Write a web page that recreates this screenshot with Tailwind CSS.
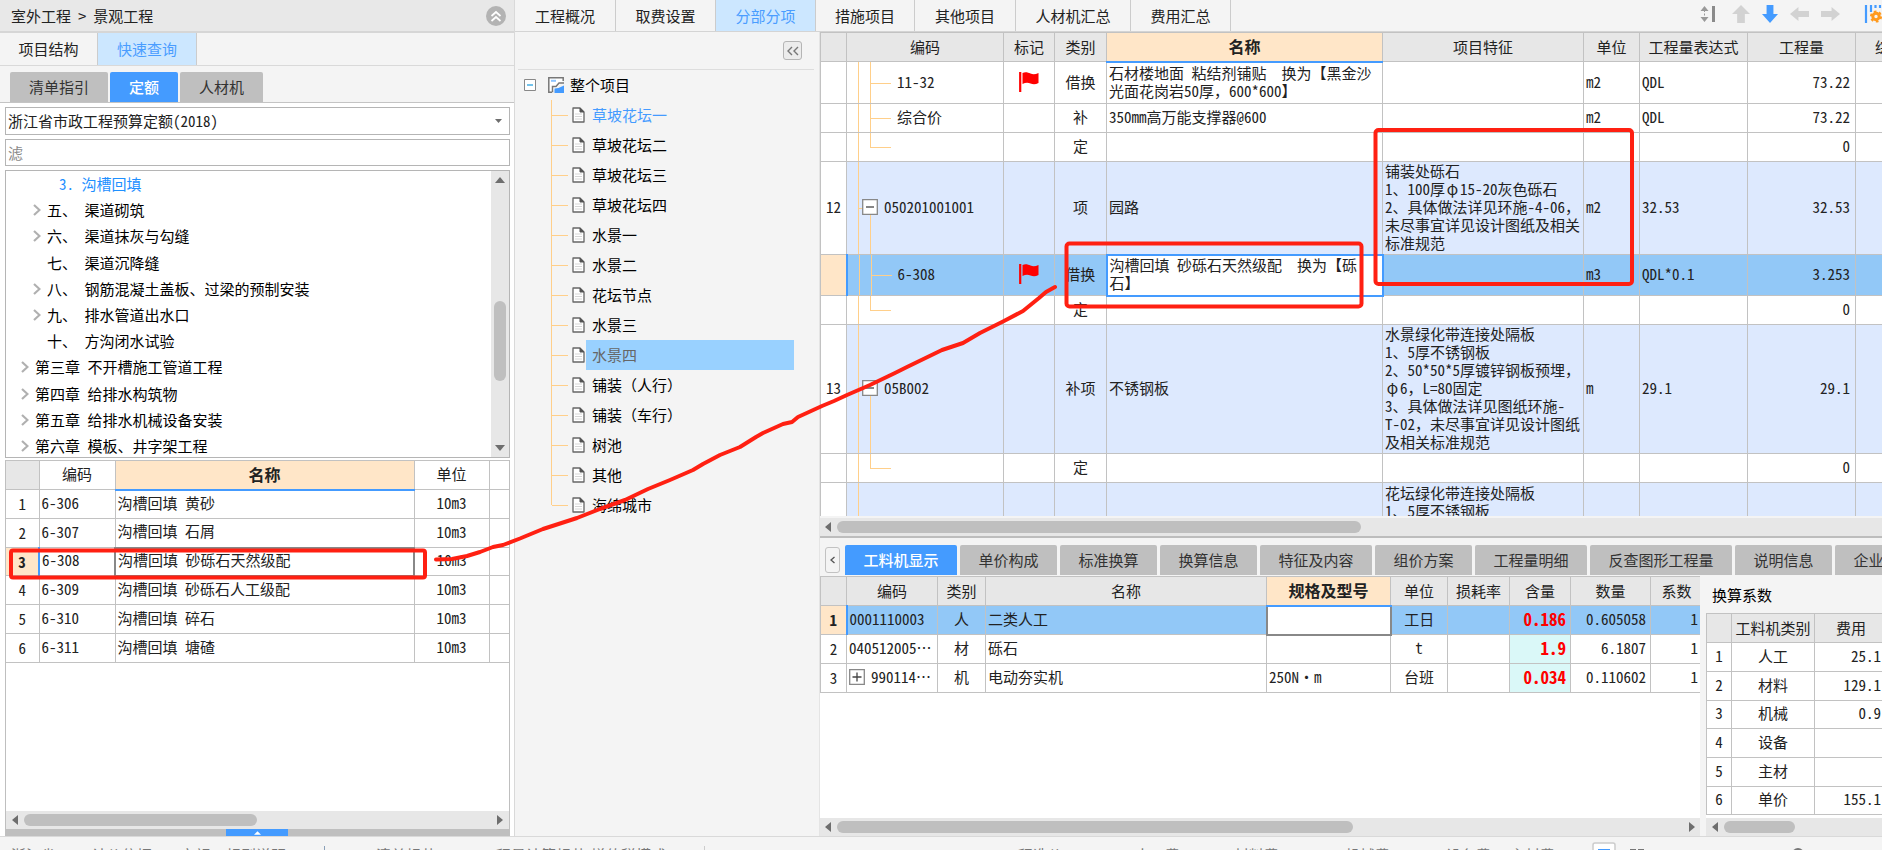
<!DOCTYPE html>
<html lang="zh-CN">
<head>
<meta charset="utf-8">
<title>室外工程 - 景观工程</title>
<script src="https://cdn.jsdelivr.net/npm/@tailwindcss/browser@4"></script>
</head>
<body class="relative h-screen overflow-hidden bg-[#f4f4f4] font-['Noto_Sans_CJK_SC',sans-serif] text-[15px] leading-[18px] text-[#222]">

<svg class="hidden">
  <symbol id="doc" viewBox="0 0 13 16"><path d="M1 1h7l4 4v10H1z" fill="#fff" stroke="#666" stroke-width="1.3" stroke-linejoin="round"/><path d="M8 1v4h4z" fill="#555" stroke="#555"/><path d="M3 7h7M3 9.5h7M3 12h7" stroke="#ccc" stroke-width=".8"/></symbol>
  <symbol id="flag" viewBox="0 0 20 20"><path d="M1.2 0v20" stroke="#f00" stroke-width="2.2"/><path d="M3.5 1c3-1.500 5.500-.5 8 .6 2.500 1 5 .8 8-.6v10c-3 1.600-5.500 1.500-8 .5s-5-1-8 .5z" fill="#f00"/></symbol>
  <symbol id="chev" viewBox="0 0 8 12"><path d="M1 1l5.500 5L1 11" fill="none" stroke="#b0b0b0" stroke-width="2.2"/></symbol>
  <symbol id="tl" viewBox="0 0 6 10"><path d="M6 0v10L0 5z" fill="#6e6e6e"/></symbol>
  <symbol id="tr" viewBox="0 0 6 10"><path d="M0 0v10l6-5z" fill="#6e6e6e"/></symbol>
  <symbol id="tu" viewBox="0 0 10 6"><path d="M0 6h10L5 0z" fill="#6e6e6e"/></symbol>
  <symbol id="td" viewBox="0 0 10 6"><path d="M0 0h10L5 6z" fill="#6e6e6e"/></symbol>
  <symbol id="minus" viewBox="0 0 16 16"><path d="M.7.700h14.600v14.600H.7z" fill="#fff" stroke="#888" stroke-width="1.300"/><path d="M4 8h8" stroke="#444" stroke-width="1.300"/></symbol>
  <symbol id="plus" viewBox="0 0 16 16"><path d="M.7.700h14.600v14.600H.7z" fill="#fff" stroke="#888" stroke-width="1.300"/><path d="M3.500 8h9M8 3.500v9" stroke="#444" stroke-width="1.300"/></symbol>
</svg>

<div class="flex h-full flex-col">
<main class="flex min-h-0 flex-1">

  <!-- Left panel: quick lookup -->
  <aside class="flex w-[515px] shrink-0 flex-col border-r border-[#d9d9d9]">
    <div class="flex h-[33px] shrink-0 items-center justify-between border-b-2 border-[#d6d6d6] bg-[#e8e8e8] pr-2 pl-[11px]">
      <span class="flex gap-[7px]"><span>室外工程</span><span>&gt;</span><span>景观工程</span></span>
      <button aria-label="收起"><svg class="block size-5" viewBox="0 0 20 20"><circle cx="10" cy="10" r="10" fill="#b3b3b3"/><path d="M5.500 10L10 6l4.500 4M5.500 15l4.500-4 4.500 4" fill="none" stroke="#fff" stroke-width="1.700"/></svg></button>
    </div>
    <div class="flex h-[33px] shrink-0 border-b border-[#d9d9d9]">
      <button class="w-[98px] border-r border-[#ccc]">项目结构</button>
      <button class="w-[99px] border-r border-[#ccc] bg-[#cce7ff] text-[#4a9dff]">快速查询</button>
    </div>
    <div class="flex h-[37px] shrink-0 items-end gap-[2px] border-b border-[#c4c4c4] pl-[10px]">
      <button class="h-[30px] w-[98px] rounded-t-[2px] bg-[#bfbfbf] text-[#333]">清单指引</button>
      <button class="h-[30px] w-[68px] rounded-t-[2px] bg-[#449bff] font-medium text-white">定额</button>
      <button class="h-[30px] w-[83px] rounded-t-[2px] bg-[#bfbfbf] text-[#333]">人材机</button>
    </div>
    <div class="flex min-h-0 flex-1 flex-col bg-white pr-1 pl-[5px] font-['Noto_Sans_Mono_CJK_SC','Noto_Sans_CJK_SC',monospace]">
      <div class="relative mt-1 h-7 shrink-0">
        <select aria-label="定额库" class="h-full w-full appearance-none border border-[#b5b5b5] bg-white pl-[2px]"><option>浙江省市政工程预算定额(2018)</option></select>
        <svg class="pointer-events-none absolute top-3 right-2 h-1 w-[7px]" viewBox="0 0 10 6" preserveAspectRatio="none"><use href="#td"/></svg>
      </div>
      <input aria-label="过滤" placeholder="滤" class="mt-1 h-[27px] shrink-0 border border-[#b5b5b5] bg-white pl-[2px] placeholder:text-[#8a8a8a]">
      <div class="mt-1 flex h-[288px] shrink-0 overflow-hidden border border-[#b5b5b5] text-black">
        <ul class="flex h-[288px] flex-1 flex-col [&_li]:flex [&_li]:flex-1 [&_li]:items-center [&_li]:whitespace-pre [&_svg]:h-3 [&_svg]:w-2">
          <li class="pl-[53px] text-[#1e90ff]">3. 沟槽回填</li>
          <li class="gap-[6px] pl-[27px]"><svg><use href="#chev"/></svg>五、 渠道砌筑</li>
          <li class="gap-[6px] pl-[27px]"><svg><use href="#chev"/></svg>六、 渠道抹灰与勾缝</li>
          <li class="pl-[41px]">七、 渠道沉降缝</li>
          <li class="gap-[6px] pl-[27px]"><svg><use href="#chev"/></svg>八、 钢筋混凝土盖板、过梁的预制安装</li>
          <li class="gap-[6px] pl-[27px]"><svg><use href="#chev"/></svg>九、 排水管道出水口</li>
          <li class="pl-[41px]">十、 方沟闭水试验</li>
          <li class="gap-[6px] pl-[15px]"><svg><use href="#chev"/></svg>第三章 不开槽施工管道工程</li>
          <li class="gap-[6px] pl-[15px]"><svg><use href="#chev"/></svg>第四章 给排水构筑物</li>
          <li class="gap-[6px] pl-[15px]"><svg><use href="#chev"/></svg>第五章 给排水机械设备安装</li>
          <li class="gap-[6px] pl-[15px]"><svg><use href="#chev"/></svg>第六章 模板、井字架工程</li>
        </ul>
        <div class="flex w-[18px] flex-col items-center bg-[#e7e7e7] py-[6px]">
          <svg class="h-[6px] w-[10px]"><use href="#tu"/></svg>
          <div class="mt-[118px] h-20 w-3 rounded-full bg-[#bfbfbf]"></div>
          <svg class="mt-auto h-[6px] w-[10px]"><use href="#td"/></svg>
        </div>
      </div>
      <div class="mt-[2px] flex min-h-0 flex-1 flex-col border-x border-[#bfbfbf]">
        <table class="w-full table-fixed border-collapse whitespace-nowrap [&_td]:border [&_td]:border-[#c2c2c2] [&_td]:p-0 [&_td]:pb-[3px] [&_td:first-child]:border-l-0 [&_td:first-child]:pb-0 [&_td:first-child]:text-center [&_td:last-child]:border-r-0 [&_td:nth-child(2)]:pl-[2px] [&_td:nth-child(3)]:pl-[2px] [&_td:nth-child(4)]:text-center [&_th]:border [&_th]:border-[#c2c2c2] [&_th]:pb-[2px] [&_th]:font-normal [&_th:first-child]:border-l-0 [&_th:last-child]:border-r-0 [&_tr]:h-[29px]">
          <colgroup><col class="w-[33px]"><col class="w-[76px]"><col class="w-[299px]"><col class="w-[75px]"><col></colgroup>
          <thead><tr><th class="bg-[#e7e7e7]"></th><th>编码</th><th class="border-b-2! border-b-[#449bff]! bg-[#ffe6c8] text-base leading-[18px] font-bold!">名称</th><th>单位</th><th></th></tr></thead>
          <tbody>
            <tr><td>1</td><td>6-306</td><td>沟槽回填 黄砂</td><td>10m3</td><td></td></tr>
            <tr><td>2</td><td>6-307</td><td>沟槽回填 石屑</td><td>10m3</td><td></td></tr>
            <tr class="h-7!"><td class="border-r-2! border-r-[#449bff]! bg-[#ffe6c8] font-bold">3</td><td>6-308</td><td class="border-2! border-[#888]!">沟槽回填 砂砾石天然级配</td><td>10m3</td><td></td></tr>
            <tr><td>4</td><td>6-309</td><td>沟槽回填 砂砾石人工级配</td><td>10m3</td><td></td></tr>
            <tr><td>5</td><td>6-310</td><td>沟槽回填 碎石</td><td>10m3</td><td></td></tr>
            <tr><td>6</td><td>6-311</td><td>沟槽回填 塘碴</td><td>10m3</td><td></td></tr>
          </tbody>
        </table>
        <div class="mt-auto flex h-[18px] items-center bg-[#e7e7e7] px-[6px]">
          <svg class="h-[10px] w-[6px]"><use href="#tl"/></svg>
          <div class="ml-[6px] h-3 w-[233px] rounded-full bg-[#bfbfbf]"></div>
          <svg class="ml-auto h-[10px] w-[6px]"><use href="#tr"/></svg>
        </div>
        <div class="flex h-[7px] bg-[#bfbfbf] pl-[220px]"><button aria-label="展开" class="flex w-[62px] items-center justify-center bg-[#449bff]"><svg class="h-1 w-[7px]" viewBox="0 0 8 4"><path d="M0 4h8L4 0z" fill="#fff"/></svg></button></div>
      </div>
    </div>
  </aside>

  <div class="flex min-w-0 flex-1 flex-col">
    <!-- Top tabs and row tools -->
    <div class="flex h-8 shrink-0 items-stretch border-b border-[#d4d4d4]">
      <nav class="flex [&_button]:border-r [&_button]:border-[#ccc]">
        <button class="w-[101px]">工程概况</button><button class="w-[100px]">取费设置</button><button class="w-[100px] bg-[#cce7ff] text-[#4a9dff]">分部分项</button><button class="w-[99px]">措施项目</button><button class="w-[101px]">其他项目</button><button class="w-[115px]">人材机汇总</button><button class="w-[100px]">费用汇总</button>
      </nav>
      <div class="ml-auto flex items-center gap-3 overflow-hidden pb-1">
        <button aria-label="行高"><svg class="h-4 w-4" viewBox="0 0 16 16"><path d="M4.500 0l4 5h-8zM4.500 16l4-5h-8z" fill="#999"/><path d="M4.500 4v8" stroke="#999" stroke-dasharray="2 1.500"/><path d="M12 0h3v16h-3z" fill="#8a8a8a"/></svg></button>
        <button aria-label="上移" class="ml-1"><svg class="h-[18px] w-[18px]" viewBox="0 0 14 18" preserveAspectRatio="none"><path d="M7 0l7 9H10v9H4V9H0z" fill="#d2d2d2"/></svg></button>
        <button aria-label="下移"><svg class="h-[18px] w-[16px]" viewBox="0 0 14 18" preserveAspectRatio="none"><path d="M7 18l7-9H10V0H4v9H0z" fill="#449bff"/></svg></button>
        <button aria-label="左移"><svg class="h-[14px] w-[19px]" viewBox="0 0 18 14" preserveAspectRatio="none"><path d="M0 7l8-7v4h10v6H8v4z" fill="#d2d2d2"/></svg></button>
        <button aria-label="右移"><svg class="h-[14px] w-[19px]" viewBox="0 0 18 14" preserveAspectRatio="none"><path d="M18 7l-8-7v4H0v6h10v4z" fill="#d2d2d2"/></svg></button>
        <button aria-label="列设置" class="ml-3 w-[18px]"><svg class="h-[20px] w-[18px]" viewBox="0 0 18 20"><path d="M2 1v18M7 1v7M11.500 1v3M16 1v3" stroke="#449bff" stroke-width="2.200"/><circle cx="12" cy="12.500" r="3.200" fill="none" stroke="#ff9a1f" stroke-width="3"/><circle cx="12" cy="12.500" r="5" fill="none" stroke="#ff9a1f" stroke-width="2.200" stroke-dasharray="2.600 2.600"/></svg></button>
      </div>
    </div>

    <div class="flex min-h-0 flex-1">
      <!-- Project tree -->
      <aside class="w-[305px] shrink-0 border-r border-[#e4e4e4] pl-[3px]">
        <div class="mr-[5px] flex h-[38px] items-center justify-end border-b border-[#ddd] pr-[12px]">
          <button aria-label="折叠" class="flex size-[19px] items-center justify-center rounded-[3px] border border-[#b5b5b5] bg-[#ececec]"><svg class="h-[10px] w-3" viewBox="0 0 12 10"><path d="M5 1L1 5l4 4M11 1L7 5l4 4" fill="none" stroke="#777" stroke-width="1.400"/></svg></button>
        </div>
        <div class="flex h-[30px] items-center pl-[6px]">
          <svg class="size-[12px]" viewBox="0 0 12 12"><path d="M.5.500h11v11H.5z" fill="#fff" stroke="#888"/><path d="M3 6h6" stroke="#29a3e0" stroke-width="1.300"/></svg>
          <svg class="ml-3 size-4" viewBox="0 0 16 16"><path d="M15.200 4V.8H.8v14.400H4" fill="#fff" stroke="#777" stroke-width="1.500"/><path d="M3 3.800h5" stroke="#8cc4ff" stroke-width="2"/><path d="M4.500 15.200V9.500h3.500l3-3.500h5" fill="none" stroke="#777" stroke-width="1.500"/><path d="M6.500 16v-4.500l4-.5 5.500-2.500V16z" fill="#449bff"/></svg>
          <span class="ml-[6px] text-black">整个项目</span>
        </div>
        <ul class="pl-[33px] text-black [&_i]:h-px [&_i]:w-4 [&_i]:bg-[#ffcf8a] [&_li]:flex [&_li]:h-[30px] [&_li]:items-center [&_li]:border-l [&_li]:border-[#ffcf8a] [&_span]:flex [&_span]:h-full [&_span]:w-[208px] [&_span]:items-center [&_span]:pl-[6px] [&_svg]:mr-px [&_svg]:ml-1 [&_svg]:h-4 [&_svg]:w-[13px]">
          <li><i></i><svg><use href="#doc"/></svg><span class="text-[#449bff]">草坡花坛一</span></li>
          <li><i></i><svg><use href="#doc"/></svg><span>草坡花坛二</span></li>
          <li><i></i><svg><use href="#doc"/></svg><span>草坡花坛三</span></li>
          <li><i></i><svg><use href="#doc"/></svg><span>草坡花坛四</span></li>
          <li><i></i><svg><use href="#doc"/></svg><span>水景一</span></li>
          <li><i></i><svg><use href="#doc"/></svg><span>水景二</span></li>
          <li><i></i><svg><use href="#doc"/></svg><span>花坛节点</span></li>
          <li><i></i><svg><use href="#doc"/></svg><span>水景三</span></li>
          <li><i></i><svg><use href="#doc"/></svg><span class="bg-[#99d1ff] text-[#666]">水景四</span></li>
          <li><i></i><svg><use href="#doc"/></svg><span>铺装（人行）</span></li>
          <li><i></i><svg><use href="#doc"/></svg><span>铺装（车行）</span></li>
          <li><i></i><svg><use href="#doc"/></svg><span>树池</span></li>
          <li><i></i><svg><use href="#doc"/></svg><span>其他</span></li>
          <li class="relative border-l-transparent!"><b class="absolute top-0 -left-px h-[15px] w-px bg-[#ffcf8a]"></b><i></i><svg><use href="#doc"/></svg><span>海绵城市</span></li>
        </ul>
      </aside>

      <section class="flex min-w-0 flex-1 flex-col font-['Noto_Sans_Mono_CJK_SC','Noto_Sans_CJK_SC',monospace]">
        <!-- Bill of quantities -->
        <div class="min-h-0 flex-1 overflow-hidden bg-white">
          <table class="w-[1135px] table-fixed border-collapse whitespace-nowrap [&_b]:absolute [&_b]:bg-[#ffcf8a] [&_td]:border [&_td]:border-[#c2c2c2] [&_td]:px-[2px] [&_td]:pt-0 [&_td]:pb-[2px] [&_td:nth-child(1)]:bg-white [&_td:nth-child(1)]:text-center [&_td:nth-child(2)]:relative [&_td:nth-child(4)]:text-center [&_td:nth-child(9)]:pr-[5px] [&_td:nth-child(9)]:text-right [&_th]:border [&_th]:border-[#c2c2c2] [&_th]:bg-[#e7e7e7] [&_th]:px-0 [&_th]:pt-0 [&_th]:pb-px [&_th]:font-normal">
            <colgroup><col class="w-[26px]"><col class="w-[157px]"><col class="w-[51px]"><col class="w-[52px]"><col class="w-[276px]"><col class="w-[201px]"><col class="w-[56px]"><col class="w-[108px]"><col class="w-[108px]"><col></colgroup>
            <thead><tr class="h-[29px]"><th></th><th>编码</th><th>标记</th><th>类别</th><th class="border-b-2! border-b-[#449bff]! bg-[#ffe6c8]! text-base leading-[18px] font-bold!">名称</th><th>项目特征</th><th>单位</th><th>工程量表达式</th><th>工程量</th><th>综合单价</th></tr></thead>
            <tbody>
              <tr class="h-[42px]"><td></td><td class="pl-[50px]!"><b class="inset-y-0 left-[11px] w-px"></b><b class="inset-y-0 left-[23px] w-px"></b><b class="top-1/2 left-[23px] h-px w-[21px]"></b>11-32</td><td><svg class="mx-auto size-5"><use href="#flag"/></svg></td><td>借换</td><td>石材楼地面 粘结剂铺贴　换为【黑金沙<br>光面花岗岩50厚，600*600】</td><td></td><td>m2</td><td>QDL</td><td>73.22</td><td></td></tr>
              <tr class="h-[29px]"><td></td><td class="pl-[50px]!"><b class="inset-y-0 left-[11px] w-px"></b><b class="inset-y-0 left-[23px] w-px"></b><b class="top-1/2 left-[23px] h-px w-[21px]"></b>综合价</td><td></td><td>补</td><td>350mm高万能支撑器@600</td><td></td><td>m2</td><td>QDL</td><td>73.22</td><td></td></tr>
              <tr class="h-[29px]"><td></td><td><b class="inset-y-0 left-[11px] w-px"></b><b class="top-0 left-[23px] h-1/2 w-px"></b><b class="top-1/2 left-[23px] h-px w-[21px]"></b></td><td></td><td>定</td><td></td><td></td><td></td><td></td><td>0</td><td></td></tr>
              <tr class="h-[93px] bg-[#dde9fe]"><td>12</td><td class="pl-[15px]!"><b class="inset-y-0 left-[11px] w-px"></b><b class="top-1/2 left-[11px] h-px w-1"></b><b class="top-1/2 bottom-0 left-[23px] w-px"></b><div class="relative flex items-center gap-[6px]"><svg class="size-4"><use href="#minus"/></svg>050201001001</div></td><td></td><td>项</td><td>园路</td><td>铺装处砾石<br>1、100厚<span class="inline-block w-[15px] text-center">φ</span>15-20灰色砾石<br>2、具体做法详见环施-4-06，<br>未尽事宜详见设计图纸及相关<br>标准规范</td><td>m2</td><td>32.53</td><td>32.53</td><td></td></tr>
              <tr class="h-[41px] bg-[#92c8f7]"><td class="border-r-2! border-r-[#449bff]! bg-[#ffe6c8]!"></td><td class="pl-[50px]!"><b class="inset-y-0 left-[11px] w-px"></b><b class="inset-y-0 left-[23px] w-px"></b><b class="top-1/2 left-[23px] h-px w-[21px]"></b>6-308</td><td><svg class="mx-auto size-5"><use href="#flag"/></svg></td><td>借换</td><td class="border-2! border-[#449bff]! bg-white">沟槽回填 砂砾石天然级配　换为【砾<br>石】</td><td></td><td>m3</td><td>QDL*0.1</td><td>3.253</td><td></td></tr>
              <tr class="h-[29px]"><td></td><td><b class="inset-y-0 left-[11px] w-px"></b><b class="top-0 left-[23px] h-1/2 w-px"></b><b class="top-1/2 left-[23px] h-px w-[21px]"></b></td><td></td><td>定</td><td></td><td></td><td></td><td></td><td>0</td><td></td></tr>
              <tr class="h-[129px] bg-[#dde9fe]"><td>13</td><td class="pl-[15px]!"><b class="inset-y-0 left-[11px] w-px"></b><b class="top-1/2 left-[11px] h-px w-1"></b><b class="top-1/2 bottom-0 left-[23px] w-px"></b><div class="relative flex items-center gap-[6px]"><svg class="size-4"><use href="#minus"/></svg>05B002</div></td><td></td><td>补项</td><td>不锈钢板</td><td>水景绿化带连接处隔板<br>1、5厚不锈钢板<br>2、50*50*5厚镀锌钢板预埋，<br><span class="inline-block w-[15px] text-center">φ</span>6，L=80固定<br>3、具体做法详见图纸环施-<br>T-02，未尽事宜详见设计图纸<br>及相关标准规范</td><td>m</td><td>29.1</td><td>29.1</td><td></td></tr>
              <tr class="h-[29px]"><td></td><td><b class="inset-y-0 left-[11px] w-px"></b><b class="top-0 left-[23px] h-1/2 w-px"></b><b class="top-1/2 left-[23px] h-px w-[21px]"></b></td><td></td><td>定</td><td></td><td></td><td></td><td></td><td>0</td><td></td></tr>
              <tr class="h-[60px] bg-[#dde9fe] align-top"><td></td><td><b class="inset-y-0 left-[11px] w-px"></b></td><td></td><td></td><td></td><td class="pt-px!">花坛绿化带连接处隔板<br>1、5厚不锈钢板</td><td></td><td></td><td></td><td></td></tr>
            </tbody>
          </table>
        </div>
        <div class="mt-[2px] flex h-5 shrink-0 items-center border-b-2 border-[#bdbdbd] bg-[#e7e7e7] pl-[5px]">
          <svg class="h-[10px] w-[6px]"><use href="#tl"/></svg>
          <div class="ml-[6px] h-3 w-[524px] rounded-full bg-[#bfbfbf]"></div>
        </div>

        <!-- Detail tabs -->
        <div class="flex h-[38px] shrink-0 items-end gap-[2px] overflow-hidden pb-px pl-[5px] font-['Noto_Sans_CJK_SC',sans-serif] [&_button]:shrink-0">
          <button aria-label="向左滚动" class="mr-[3px] mb-[2px] flex h-[26px] w-[15px] items-center justify-center rounded-[3px] border border-[#c2c2c2] bg-[#f4f4f4]"><svg class="h-2 w-[5px]" viewBox="0 0 5 8"><path d="M4.500 1l-3.500 3 3.500 3" fill="none" stroke="#555" stroke-width="1.300"/></svg></button>
          <div class="flex gap-[3px] [&_button]:h-[30px] [&_button]:rounded-t-[2px] [&_button]:bg-[#bfbfbf] [&_button]:text-[#333]">
            <button class="w-[112px] bg-[#449bff]! font-medium text-white!">工料机显示</button><button class="w-[97px]">单价构成</button><button class="w-[97px]">标准换算</button><button class="w-[97px]">换算信息</button><button class="w-[112px]">特征及内容</button><button class="w-[97px]">组价方案</button><button class="w-[112px]">工程量明细</button><button class="w-[142px]">反查图形工程量</button><button class="w-[97px]">说明信息</button><button class="w-[97px]">企业定额</button>
          </div>
        </div>

        <div class="flex h-[260px] shrink-0">
          <!-- Labour, material and machine items -->
          <div class="flex min-w-0 flex-1 flex-col overflow-hidden bg-white">
            <table class="w-[883px] table-fixed border-collapse whitespace-nowrap [&_td]:border [&_td]:border-[#c2c2c2] [&_td]:px-[2px] [&_td]:pt-0 [&_td]:pb-[3px] [&_td:nth-child(1)]:pb-0 [&_td:nth-child(1)]:text-center [&_td:nth-child(3)]:text-center [&_td:nth-child(6)]:text-center [&_td:nth-child(8)]:pr-1 [&_td:nth-child(8)]:text-right [&_td:nth-child(8)]:text-[17px] [&_td:nth-child(8)]:leading-[18px] [&_td:nth-child(8)]:font-bold [&_td:nth-child(8)]:text-[#f00] [&_td:nth-child(9)]:pr-1 [&_td:nth-child(9)]:text-right [&_td:nth-child(10)]:pr-1 [&_td:nth-child(10)]:text-right [&_th]:border [&_th]:border-[#c2c2c2] [&_th]:bg-[#e7e7e7] [&_th]:px-0 [&_th]:pt-0 [&_th]:pb-px [&_th]:font-normal [&_tr]:h-[29px]">
              <colgroup><col class="w-[26px]"><col class="w-[91px]"><col class="w-[48px]"><col class="w-[281px]"><col class="w-[124px]"><col class="w-[57px]"><col class="w-[62px]"><col class="w-[61px]"><col class="w-[80px]"><col></colgroup>
              <thead><tr><th></th><th>编码</th><th>类别</th><th>名称</th><th class="border-b-2! border-b-[#449bff]! bg-[#ffe6c8]! text-base leading-[18px] font-bold!">规格及型号</th><th>单位</th><th>损耗率</th><th>含量</th><th>数量</th><th>系数</th></tr></thead>
              <tbody>
                <tr class="bg-[#92c8f7]"><td class="border-r-2! border-r-[#449bff]! bg-[#ffe6c8] font-bold">1</td><td>0001110003</td><td>人</td><td>二类人工</td><td class="border-2! border-[#888]! border-t-[#449bff]! bg-white"></td><td>工日</td><td></td><td>0.186</td><td>0.605058</td><td>1</td></tr>
                <tr><td>2</td><td>040512005⋯</td><td>材</td><td>砾石</td><td></td><td>t</td><td></td><td class="bg-[#daf8f8]">1.9</td><td>6.1807</td><td>1</td></tr>
                <tr><td>3</td><td><div class="flex items-center gap-[6px]"><svg class="size-4"><use href="#plus"/></svg>990114⋯</div></td><td>机</td><td>电动夯实机</td><td>250N·m</td><td>台班</td><td></td><td class="bg-[#daf8f8]">0.034</td><td>0.110602</td><td>1</td></tr>
              </tbody>
            </table>
            <div class="mt-auto flex h-[18px] items-center bg-[#e7e7e7] px-[5px]">
              <svg class="h-[10px] w-[6px]"><use href="#tl"/></svg>
              <div class="ml-[6px] h-3 w-[516px] rounded-full bg-[#bfbfbf]"></div>
              <svg class="ml-auto h-[10px] w-[6px]"><use href="#tr"/></svg>
            </div>
          </div>
          <!-- Conversion factors -->
          <div class="ml-[6px] flex w-[176px] shrink-0 flex-col overflow-hidden bg-white">
            <div class="flex h-[37px] shrink-0 items-center bg-[#f4f4f4] pl-[6px] text-black">换算系数</div>
            <table class="w-[182px] table-fixed border-collapse whitespace-nowrap [&_td]:border [&_td]:border-[#c2c2c2] [&_td]:p-0 [&_td]:pb-[3px] [&_td]:text-center [&_td:last-child]:pr-[6px] [&_td:last-child]:text-right [&_th]:border [&_th]:border-[#c2c2c2] [&_th]:bg-[#e7e7e7] [&_th]:p-0 [&_th]:font-normal [&_tr]:h-[29px]">
              <colgroup><col class="w-[25px]"><col class="w-[83px]"><col></colgroup>
              <thead><tr><th></th><th>工料机类别</th><th>费用</th></tr></thead>
              <tbody>
                <tr><td>1</td><td>人工</td><td>25.1</td></tr>
                <tr><td>2</td><td>材料</td><td>129.1</td></tr>
                <tr class="h-7!"><td>3</td><td>机械</td><td>0.9</td></tr>
                <tr><td>4</td><td>设备</td><td></td></tr>
                <tr><td>5</td><td>主材</td><td></td></tr>
                <tr class="h-7!"><td>6</td><td>单价</td><td>155.1</td></tr>
              </tbody>
            </table>
            <div class="mt-auto flex h-[18px] shrink-0 items-center bg-[#e7e7e7] pl-[6px]">
              <svg class="h-[10px] w-[6px]"><use href="#tl"/></svg>
              <div class="ml-[6px] h-3 w-[71px] rounded-full bg-[#bfbfbf]"></div>
            </div>
          </div>
        </div>
      </section>
    </div>
  </div>
</main>

<!-- Status bar -->
<footer class="flex h-[14px] shrink-0 items-start overflow-hidden border-t border-[#d9d9d9] pt-[9px] pl-[11px] whitespace-nowrap text-[#777]">
  <span class="w-[81px]">浙江省</span><span class="w-[88px]">计价依据</span><span class="w-[46px]">定额</span><span class="w-[98px]">规则说明</span>
  <span class="h-4 w-[52px] border-l border-[#8aa0b8]"></span>
  <span class="w-[105px]">清单规范</span><span class="w-[110px]">工程量计算规范</span><span class="w-[113px]">增值税模式</span>
  <span class="h-4 w-[299px] border-l border-[#ccc]"></span>
  <span class="w-[132px]">工程造价</span><span class="w-[99px]">人工费</span><span class="w-[111px]">材料费</span><span class="w-[101px]">机械费</span><span class="w-[64px]">设备费</span><span class="w-[82px]">主材费</span>
  <svg class="-mt-1 h-3 w-6" viewBox="0 0 24 12"><path d="M1 12V3q0-2 2-2h18q2 0 2 2v9" fill="#fff" stroke="#ccc" stroke-width="1.500"/><path d="M6 7h12v5H6z" fill="#449bff"/></svg>
  <svg class="mt-[2px] ml-[14px] h-2 w-4" viewBox="0 0 16 8"><path d="M0 1h6v7H0zM8 1h6v7H8z" fill="#777"/></svg>
  <svg class="mt-[2px] ml-[146px] size-3" viewBox="0 0 12 12"><circle cx="6" cy="6" r="6" fill="#777"/></svg>
</footer>
</div>

<!-- Hand-drawn annotation marks -->
<svg class="pointer-events-none absolute inset-0 h-full w-full" fill="none" stroke="#ff2012" stroke-width="4" stroke-linejoin="round" stroke-linecap="round">
  <rect x="11" y="550.500" width="414" height="27" rx="2"/>
  <rect x="1066.500" y="243.500" width="295" height="63" rx="3"/>
  <rect x="1375.500" y="130" width="256.500" height="154" rx="3"/>
  <path d="M436 559.500L452 559 467 556 480 552 493 547 503 545 520 538.500 526 536 543 529 577 518 600 509 625 500 648 489 670 480 693 470 703 464 720 455 740 447 756 437 763 433 783 424 792 422 798 417 822 406 834 401 847 395 870 385 895 373 907 367 942 350 963 343 980 333 1004 321 1023 311 1039 298 1046 292 1055 287"/>
</svg>
</body>
</html>
